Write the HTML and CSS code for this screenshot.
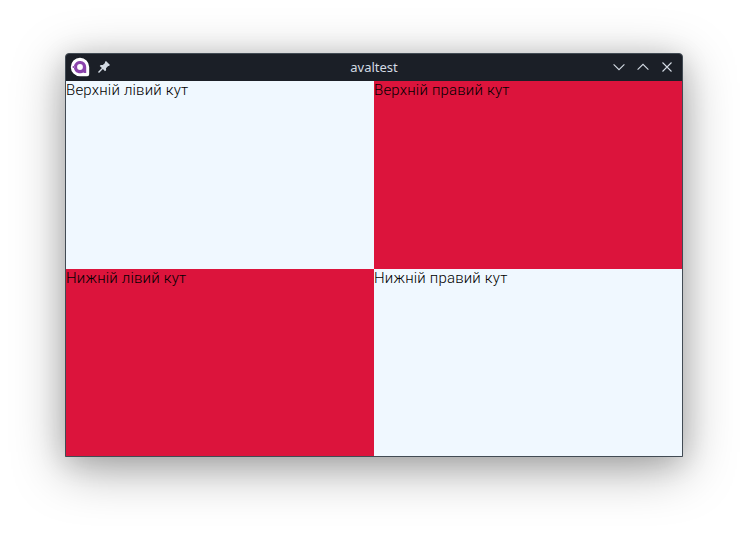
FILE: index.html
```html
<!DOCTYPE html>
<html lang="uk">
<head>
<meta charset="utf-8">
<title>avaltest</title>
<link rel="stylesheet" href="styles.css">
</head>
<body>
<main class="window">
  <header class="titlebar">
    <div class="tools">
      <svg class="logo" viewBox="0 0 20 20" width="20" height="20">
        <path d="M10 .8a9.2 9.2 0 1 0 0 18.4h7.2a2 2 0 0 0 2-2V10A9.2 9.2 0 0 0 10 .8z" fill="#fff"/>
        <path d="M3.9 9A6.2 6.2 0 0 1 16.2 10v6.1h-2.6v-.9A6.2 6.2 0 0 1 3.9 11a1.1 1.1 0 0 0 0-2z" fill="#8b44ac"/>
        <circle cx="3.4" cy="10" r=".9" fill="#8b44ac"/>
        <circle cx="10" cy="10" r="2.9" fill="#fff"/>
      </svg>
      <svg class="pin" viewBox="0 0 14 14" width="14" height="14">
        <path d="M9 1l4 4-1.2 1.1-.7-.1-2.1 2.2.1 2L8 11.3 5.9 9.1 2 13l-1-1 3.9-3.9L2.7 6l1.1-1.1 2 .1L8 2.9l-.1-.8z" fill="#d3dae3"/>
      </svg>
    </div>
    <h1 class="title">avaltest</h1>
    <div class="controls">
      <svg viewBox="0 0 12 12" width="12" height="12"><path d="M.6 3.3L6 8.7l5.4-5.4"/></svg>
      <svg viewBox="0 0 12 12" width="12" height="12"><path d="M.6 8.7L6 3.3l5.4 5.4"/></svg>
      <svg viewBox="0 0 12 12" width="12" height="12"><path d="M1.5 1.5l9 9M10.5 1.5l-9 9"/></svg>
    </div>
  </header>
  <section class="grid">
    <div class="cell light">Верхній лівий кут</div>
    <div class="cell red">Верхній правий кут</div>
    <div class="cell red">Нижній лівий кут</div>
    <div class="cell light">Нижній правий кут</div>
  </section>
</main>
</body>
</html>
```
FILE: styles.css
```css
* { box-sizing: border-box; }
body {
  margin: 0;
  height: 535px;
  padding: 53px 66px 78px 65px;
  background: #fff;
  overflow: hidden;
}
.window {
  width: 618px;
  height: 404px;
  border: 1px solid #424b54;
  border-radius: 4px 4px 0 0;
  overflow: hidden;
  background: #1b1f27;
  box-shadow: 0 12px 52px rgba(0, 0, 0, .34), 0 5px 28px rgba(0, 0, 0, .14);
}
.titlebar {
  display: grid;
  grid-template-columns: 1fr auto 1fr;
  align-items: center;
  height: 27px;
  padding: 0 9px 1px 4px;
  color: #d3dae3;
}
.tools { display: flex; align-items: center; gap: 7px; }
.title {
  margin: 0 0 0 5px;
  font: 400 13px/18px "Noto Sans", sans-serif;
}
.controls { display: flex; justify-content: flex-end; gap: 12px; }
.controls path { fill: none; stroke: #d3dae3; stroke-width: 1.1; }
.logo, .pin { display: block; }
.grid {
  display: grid;
  grid-template-columns: 308px 308px;
  grid-template-rows: 188px 187px;
}
.cell {
  font: 300 15px/18px Roboto, sans-serif;
  letter-spacing: .19px;
  color: #000;
}
.light { background: #f0f8ff; }
.red { background: #dc143c; }
```
